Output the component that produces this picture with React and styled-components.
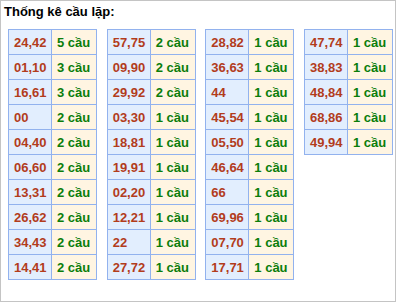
import React from 'react'
import styled, { createGlobalStyle } from 'styled-components'

const columns = [
  [['24,42', 5], ['01,10', 3], ['16,61', 3], ['00', 2], ['04,40', 2], ['06,60', 2], ['13,31', 2], ['26,62', 2], ['34,43', 2], ['14,41', 2]],
  [['57,75', 2], ['09,90', 2], ['29,92', 2], ['03,30', 1], ['18,81', 1], ['19,91', 1], ['02,20', 1], ['12,21', 1], ['22', 1], ['27,72', 1]],
  [['28,82', 1], ['36,63', 1], ['44', 1], ['45,54', 1], ['05,50', 1], ['46,64', 1], ['66', 1], ['69,96', 1], ['07,70', 1], ['17,71', 1]],
  [['47,74', 1], ['38,83', 1], ['48,84', 1], ['68,86', 1], ['49,94', 1]],
]

export default function App () {
  return (
    <>
      <GlobalStyle />
      <Box>
        <Title>Thống kê cầu lặp:</Title>
        <Tables>
          {columns.map((rows, i) => (
            <Table key={i}>
              <tbody>
                {rows.map(([pair, count]) => (
                  <tr key={pair}>
                    <Pair>{pair}</Pair>
                    <Count>{count} cầu</Count>
                  </tr>
                ))}
              </tbody>
            </Table>
          ))}
        </Tables>
      </Box>
    </>
  )
}

const GlobalStyle = createGlobalStyle`
  body {
    margin: 0;
    background: #fff;
    font-family: 'Liberation Sans', Arial, sans-serif;
  }
`

const Box = styled.div`
  box-sizing: border-box;
  width: 396px;
  height: 302px;
  border: 1px solid #c4c4c4;
  padding: 3px 0 0 7px;
`

const Title = styled.div`
  margin-left: -4px;
  font-family: 'Liberation Sans', Arial, sans-serif;
  font-size: 13px;
  font-weight: bold;
  line-height: 16px;
  color: #000;
`

const Tables = styled.div`
  display: flex;
  align-items: flex-start;
  gap: 9.67px;
  margin-top: 9px;
`

const Table = styled.table`
  border-collapse: collapse;
  width: 89px;
  table-layout: fixed;
  font-family: 'Liberation Sans', Arial, sans-serif;
  font-size: 13px;
  font-weight: bold;
  line-height: 15px;
`

const Cell = styled.td`
  border: 1px solid #92b2ee;
  height: 25px;
  padding: 0 0 0 5px;
  white-space: nowrap;
  vertical-align: middle;
  box-sizing: border-box;
`

const Pair = styled(Cell)`
  width: 43px;
  background: #e2eefe;
  color: #b23c1c;
`

const Count = styled(Cell)`
  background: #fff5e2;
  color: #0b7d0b;
`
